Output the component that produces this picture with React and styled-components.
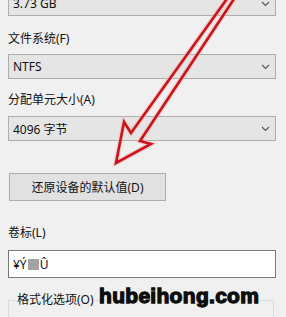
import React from "react";
import styled, { createGlobalStyle } from "styled-components";

const Global = createGlobalStyle`
  html, body {
    margin: 0;
    padding: 0;
    background: #f0f0f0;
    overflow: hidden;
  }
  body {
    font-family: "Noto Sans", "Noto Sans CJK SC", sans-serif;
    font-size: 12px;
    color: #111;
  }
`;

const Screen = styled.div`
  position: relative;
  width: 286px;
  height: 317px;
  overflow: hidden;
`;

const Panel = styled.div`
  display: flex;
  flex-direction: column;
  align-items: stretch;
  margin-top: -9px;
  padding: 0 10px 0 8px;
`;

const Label = styled.div`
  height: 16px;
  line-height: 16px;
  margin-top: ${(p) => p.$top || 14}px;
  margin-bottom: ${(p) => p.$bottom || 7}px;
  white-space: nowrap;
`;

const SelectBox = styled.div`
  box-sizing: border-box;
  height: 25px;
  display: flex;
  align-items: center;
  justify-content: space-between;
  padding: 0 5px 0 4px;
  background: #e5e5e5;
  border: 1px solid #adadad;
`;

const Chevron = styled.svg`
  width: 9px;
  height: 6px;
  flex: none;
`;

const ResetButton = styled.div`
  box-sizing: border-box;
  align-self: flex-start;
  width: 157px;
  height: 28px;
  margin: 32px 0 0 1px;
  display: flex;
  align-items: center;
  justify-content: center;
  background: #e1e1e1;
  border: 1px solid #adadad;
`;

const TextBox = styled.div`
  box-sizing: border-box;
  height: 28px;
  display: flex;
  align-items: center;
  padding: 0 4px;
  background: #fff;
  border: 1px solid #7a7a7a;
`;

const Garbled = styled.span`
  display: inline-block;
  width: 11px;
  height: 11px;
  margin: 0 1px;
  background: #a3a3a3;
`;

const Group = styled.fieldset`
  margin: 14px 2px 0 0;
  padding: 0;
  height: 40px;
  border: 1px solid #dcdcdc;
`;

const Legend = styled.legend`
  padding: 0 1px;
  margin-left: 7px;
  line-height: 16px;
`;

const Arrow = styled.svg`
  position: absolute;
  left: 0;
  top: 0;
  width: 286px;
  height: 317px;
  pointer-events: none;
`;

const Watermark = styled.div`
  position: absolute;
  left: 99px;
  top: 284px;
  font-family: "Liberation Sans", Arial, sans-serif;
  font-weight: 700;
  font-size: 21px;
  letter-spacing: 0.3px;
  color: #0d0d0d;
  -webkit-text-stroke: 1.3px #0d0d0d;
  white-space: nowrap;
`;

function Select({ value }) {
  return (
    <SelectBox>
      <span>{value}</span>
      <Chevron viewBox="0 0 9 6">
        <path d="M1 1 L4.5 4.5 L8 1" fill="none" stroke="#555" strokeWidth="1.1" />
      </Chevron>
    </SelectBox>
  );
}

const arrowPoints =
  "229,-4 131,133 124,122 116,163 151,144 140,141 236,-4";

export default function App() {
  return (
    <Screen>
      <Global />
      <Panel>
        <Select value="3.73 GB" />
        <Label $top={15}>文件系统(F)</Label>
        <Select value="NTFS" />
        <Label $top={13} $bottom={8}>分配单元大小(A)</Label>
        <Select value="4096 字节" />
        <ResetButton>还原设备的默认值(D)</ResetButton>
        <Label $top={24} $bottom={9}>卷标(L)</Label>
        <TextBox>
          ¥Ý<Garbled />Û
        </TextBox>
        <Group>
          <Legend>格式化选项(O)</Legend>
        </Group>
      </Panel>
      <Arrow viewBox="0 0 286 317">
        <polygon
          points={arrowPoints}
          fill="none"
          stroke="#f2b9b9"
          strokeOpacity="0.6"
          strokeWidth="5"
          strokeLinejoin="miter"
        />
        <polygon
          points={arrowPoints}
          fill="none"
          stroke="#c8141c"
          strokeWidth="2.6"
          strokeLinejoin="miter"
        />
      </Arrow>
      <Watermark>hubeihong.com</Watermark>
    </Screen>
  );
}
